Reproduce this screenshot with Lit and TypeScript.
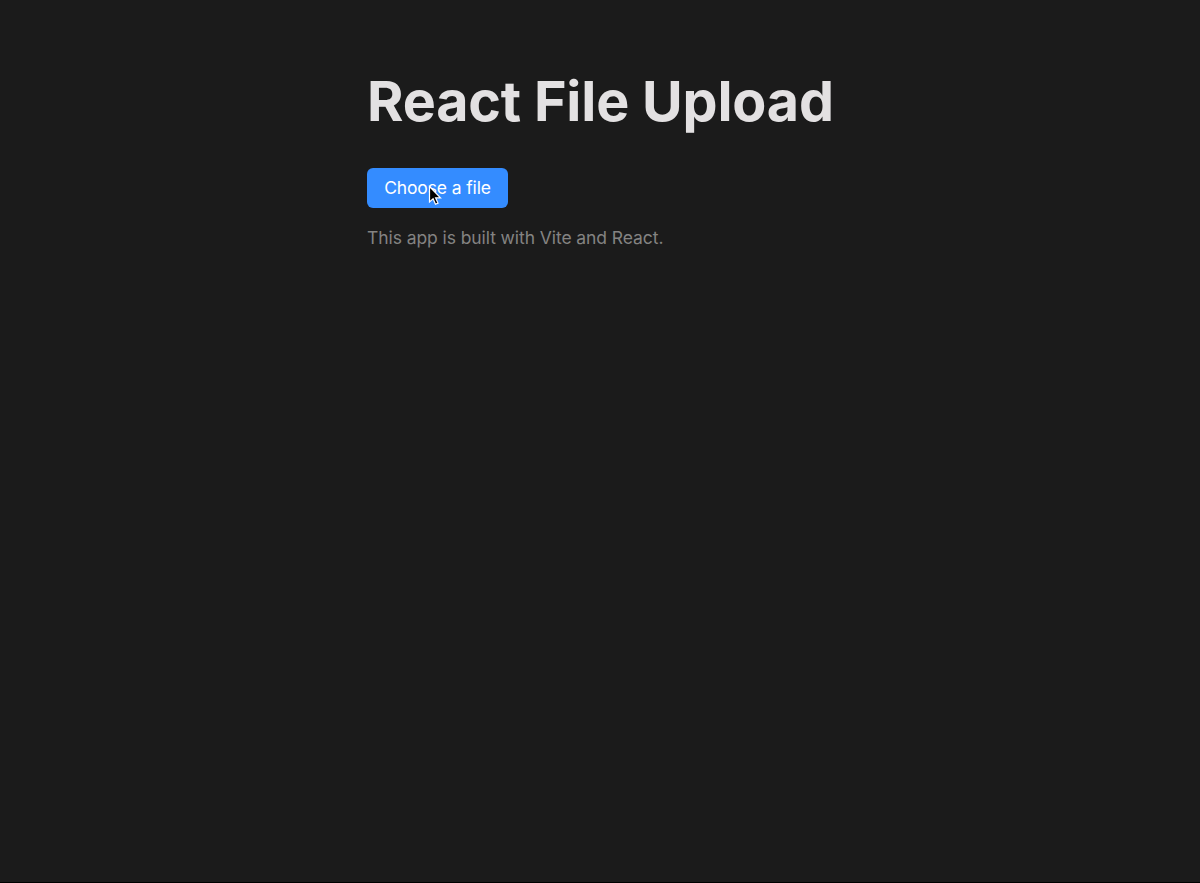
import { LitElement, html, css } from "lit";
import { customElement } from "lit/decorators.js";

@customElement("app-root")
export class AppRoot extends LitElement {
  static styles = css`
    :host {
      display: flex;
      flex-direction: column;
      align-items: center;
      box-sizing: border-box;
      min-height: 883px;
      padding-top: 67px;
      background: #1b1b1b;
      color: #e3e1e2;
      font-family: Inter, "Liberation Sans", sans-serif;
      border-bottom: 1px solid #000;
    }
    .content { width: 466px; }
    h1 {
      margin: 0 0 33px;
      font-size: 55.6px;
      line-height: 68px;
      font-weight: 700;
      letter-spacing: -0.18px;
      white-space: nowrap;
    }
    .choose {
      position: relative;
      display: block;
      width: 141px;
      height: 40px;
      padding: 0;
      border: 0;
      border-radius: 6px;
      background: #348cff;
      color: #fff;
      font: 400 17.5px/40px Inter, "Liberation Sans", sans-serif;
      letter-spacing: -0.13px;
      white-space: nowrap;
    }
    .cursor { position: absolute; left: 61px; top: 17px; width: 14px; height: 22px; }
    p {
      margin: 16px 0 0;
      font-size: 17.5px;
      line-height: 27px;
      letter-spacing: -0.08px;
      color: #848382;
      white-space: nowrap;
    }
  `;

  render() {
    return html`
      <main class="content">
        <h1>React File Upload</h1>
        <button class="choose">
          Choose a file
          <svg class="cursor" viewBox="0 0 14 22" aria-hidden="true">
            <path d="M1.5 1.5V17L5.1 13.7L7.5 19.2L10 18.1L7.6 12.8H12.5Z" fill="#000" stroke="#fff" stroke-width="1.2" />
          </svg>
        </button>
        <p>This app is built with Vite and React.</p>
      </main>
    `;
  }
}
